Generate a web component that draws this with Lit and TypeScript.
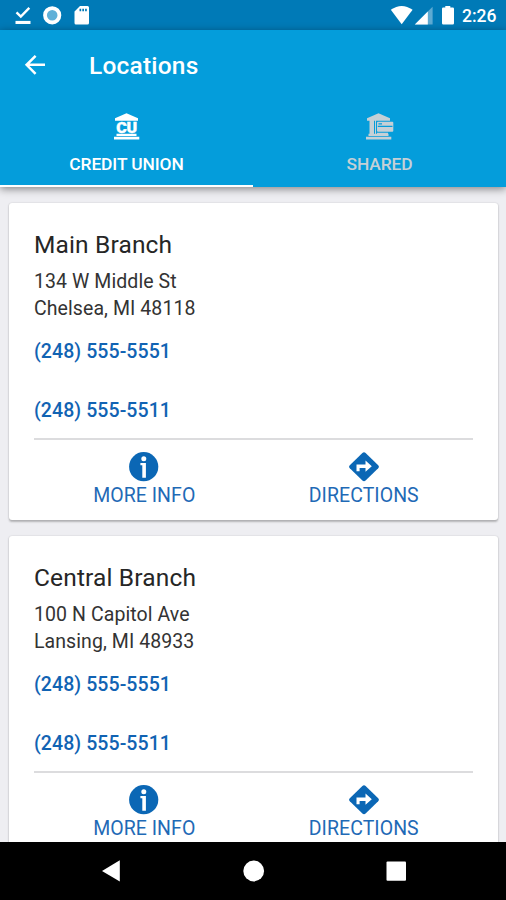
import { LitElement, html, css, svg } from "lit";
import { customElement, property } from "lit/decorators.js";

interface Branch {
  name: string;
  street: string;
  city: string;
  phones: string[];
}

const branches: Branch[] = [
  { name: "Main Branch", street: "134 W Middle St", city: "Chelsea, MI 48118", phones: ["(248) 555-5551", "(248) 555-5511"] },
  { name: "Central Branch", street: "100 N Capitol Ave", city: "Lansing, MI 48933", phones: ["(248) 555-5551", "(248) 555-5511"] },
];

const roof = svg`<path d="M13.5 0.3L25 5.3V7.7H2V5.3Z"/>`;
const base = svg`<path d="M3.5 20.8H23.5V23H3.5ZM1 23.8H26.3V26.5H1Z"/>`;

@customElement("status-bar")
export class StatusBar extends LitElement {
  static styles = css`
    :host { display: flex; height: 30px; background: #007ab7; color: #fff; justify-content: space-between; flex: none; }
    svg { display: block; fill: #fff; }
    .time { font: 500 17.5px/30px Roboto, sans-serif; padding-top: 1px; height: 29px; width: 44px; }
    .right { display: flex; }
  `;
  render() {
    return html`
      <svg width="100" height="30" viewBox="0 0 100 30">
        <path d="M15.5 20.9H30.5V24H15.5Z" />
        <path d="M16.5 12.3L20.8 16.5L29.3 7.8" fill="none" stroke="#fff" stroke-width="2.4" />
        <circle cx="52.2" cy="15.3" r="7.2" fill="#5fb0d8" stroke="#fff" stroke-width="3.8" />
        <path fill-rule="evenodd" d="M80 6H87.5Q89 6 89 7.5V23Q89 24.5 87.5 24.5H76Q74.5 24.5 74.5 23V11.5ZM79.5 8.7V11.3H81.2V8.7ZM82.3 8.7V11.3H84V8.7ZM85.1 8.7V11.3H86.8V8.7Z" />
      </svg>
      <div class="right">
        <svg width="72" height="30" viewBox="390 0 72 30">
          <path d="M390.8 9.8Q401.7 2.2 412.6 9.8L401.7 24.2Z" />
          <path d="M414.8 24.5L432.6 6.7V24.5Z" fill="#5daad2" />
          <path d="M414.8 24.5L427.8 11.5V24.5Z" />
          <path d="M445.3 6H450.3V7.6H452.8Q454 7.6 454 8.8V23.3Q454 24.5 452.8 24.5H443.2Q442 24.5 442 23.3V8.8Q442 7.6 443.2 7.6H445.3Z" />
        </svg>
        <div class="time">2:26</div>
      </div>
    `;
  }
}

@customElement("branch-card")
export class BranchCard extends LitElement {
  @property({ attribute: false }) branch!: Branch;
  static styles = css`
    :host { display: block; box-sizing: border-box; height: 317px; flex: none; background: #fff; border-radius: 3px; padding: 27px 25px 0; box-shadow: 0 1.5px 2px rgba(0, 0, 0, 0.24), 0 0 2px rgba(0, 0, 0, 0.12); color: #333; }
    .name { font-size: 24.5px; line-height: 30px; height: 38px; letter-spacing: 0.15px; color: #262626; }
    .line { font-size: 19.5px; line-height: 27px; letter-spacing: 0.08px; }
    .phone { font-size: 19.5px; line-height: 27px; font-weight: 500; color: #1163b3; margin-top: 32px; letter-spacing: 0.08px; }
    .phone.first { margin-top: 16px; }
    .actions { display: grid; grid-template-columns: 1fr 1fr; margin-top: 14px; border-top: 2px solid #dcdcde; padding-top: 12px; }
    .action { display: flex; flex-direction: column; align-items: center; color: #1f6ab6; font-size: 19.5px; line-height: 24px; gap: 2px; padding-left: 1px; letter-spacing: 0.05px; }
    svg { display: block; }
  `;
  render() {
    const b = this.branch;
    return html`
      <div class="name">${b.name}</div>
      <div class="line">${b.street}</div>
      <div class="line">${b.city}</div>
      ${b.phones.map((p, i) => html`<div class="phone ${i === 0 ? "first" : ""}">${p}</div>`)}
      <div class="actions">
        <div class="action">
          <svg width="30" height="30" viewBox="0 0 30 30">
            <circle cx="14.7" cy="14.7" r="14.6" fill="#0b67b5" />
            <path fill="#fff" d="M11.4 11H16.9V25.7H13.3V13.3H11.4Z" />
            <circle cx="14.8" cy="6.8" r="2.5" fill="#fff" />
          </svg>
          <span>MORE INFO</span>
        </div>
        <div class="action">
          <svg width="30" height="30" viewBox="0 0 30 30">
            <path fill="#0b67b5" d="M13.4 1Q15 -0.4 16.6 1L29.2 13.2Q30.6 14.7 29.2 16.2L16.6 28.5Q15 29.8 13.4 28.5L0.8 16.2Q-0.6 14.7 0.8 13.2Z" />
            <path fill="#fff" d="M7.5 19.3V12.4H16.5V8.6L22.8 14.2L16.5 19.8V16H10.6V19.3Z" />
          </svg>
          <span>DIRECTIONS</span>
        </div>
      </div>
    `;
  }
}

@customElement("app-root")
export class AppRoot extends LitElement {
  static styles = css`
    :host { display: flex; flex-direction: column; width: 506px; height: 900px; overflow: hidden; background: #eeeef2; font-family: Roboto, sans-serif; }
    svg { display: block; }
    .header { flex: none; height: 157px; background: #049ddb; color: #fff; box-shadow: 0 2px 8px rgba(0, 0, 0, 0.45); z-index: 1; display: flex; flex-direction: column; }
    .bar { display: flex; align-items: center; height: 70px; padding-left: 23px; gap: 42px; font-size: 24.5px; font-weight: 500; letter-spacing: 0.2px; }
    .tabs { display: grid; grid-template-columns: 1fr 1fr; flex: 1; }
    .tab { display: flex; flex-direction: column; align-items: center; padding-top: 13px; border-bottom: 2px solid transparent; font-size: 17.4px; font-weight: 500; line-height: 22px; gap: 12.5px; letter-spacing: -0.1px; }
    .tab svg { fill: currentColor; }
    .tab.active { border-color: #fff; }
    .tab.idle { color: #c5d0d6; }
    .cu { font: 900 15.5px Roboto, sans-serif; stroke: currentColor; stroke-width: 0.4px; }
    .list { flex: 1; min-height: 0; overflow: hidden; display: flex; flex-direction: column; gap: 16px; padding: 16px 8px 0 9px; }
    .nav { flex: none; height: 58px; background: #000; }
  `;
  render() {
    return html`
      <status-bar></status-bar>
      <div class="header">
        <div class="bar">
          <svg width="24" height="24" viewBox="0 0 24 24">
            <path d="M12.6 2.8L3.6 11.8L12.6 20.8M3.6 11.8H22" fill="none" stroke="#fff" stroke-width="2.5" />
          </svg>
          <span>Locations</span>
        </div>
        <div class="tabs">
          <div class="tab active">
            <svg width="27" height="27" viewBox="0 0 27 27">
              ${roof}${base}
              <text class="cu" x="13.7" y="19.6" text-anchor="middle" textLength="21" lengthAdjust="spacingAndGlyphs">CU</text>
            </svg>
            <span>CREDIT UNION</span>
          </div>
          <div class="tab idle">
            <svg width="29" height="27" viewBox="0 0 29 27">
              ${roof}${base}
              <path d="M4.5 7H9V21H4.5ZM10 7H11V21H10ZM12 19.8H23V21H12Z" />
              <path fill-rule="evenodd" d="M13 8.8H27.3Q28.3 8.8 28.3 9.8V17.8Q28.3 18.8 27.3 18.8H13Q12 18.8 12 17.8V9.8Q12 8.8 13 8.8ZM12.8 12.8V14.1H27.5V12.8ZM13.5 10.2V11.4H17V10.2Z" />
            </svg>
            <span>SHARED</span>
          </div>
        </div>
      </div>
      <div class="list">${branches.map((b) => html`<branch-card .branch=${b}></branch-card>`)}</div>
      <div class="nav">
        <svg width="506" height="58" viewBox="0 842 506 58" fill="#fff">
          <path d="M102 871L119.8 860.3V881.5Z" />
          <circle cx="253.7" cy="871" r="10.4" />
          <rect x="386.5" y="861.5" width="19.5" height="19.3" rx="1" />
        </svg>
      </div>
    `;
  }
}
